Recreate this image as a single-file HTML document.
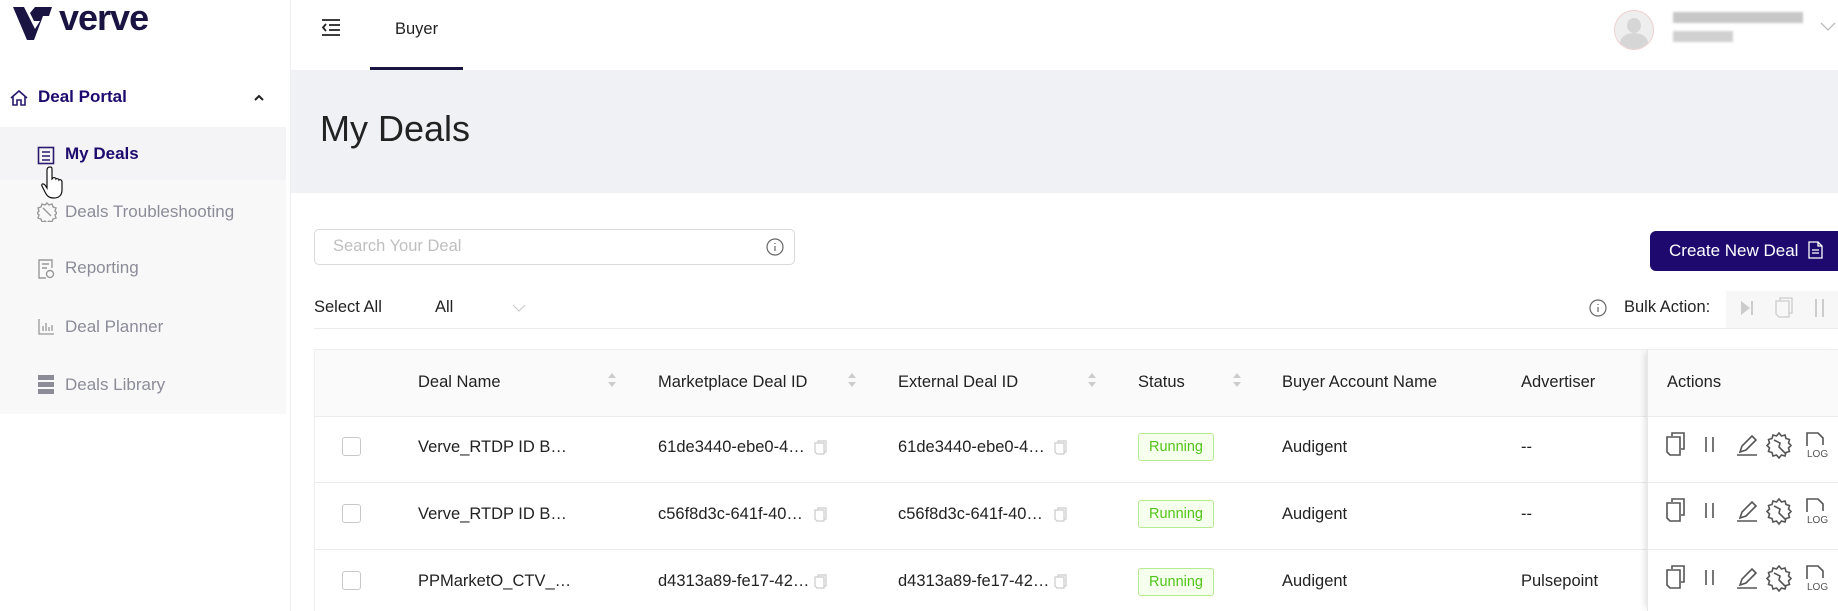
<!DOCTYPE html>
<html><head><meta charset="utf-8"><style>
*{box-sizing:border-box;margin:0;padding:0}
body{width:1838px;height:611px;overflow:hidden;background:#fff;font-family:"Liberation Sans",Arial,sans-serif;color:#222;position:relative}
.a{position:absolute}
.side{left:0;top:0;width:291px;height:611px;border-right:1px solid #eceef2;background:#fff}
.sub{left:0;top:127px;width:286px;height:287px;background:#f8f8f9}
.act{left:0;top:127px;width:286px;height:53px;background:#f4f3f5}
.mi{font-size:17px;color:#8c8c99}
.gray{left:291px;top:70px;width:1547px;height:123px;background:#f0f1f5}
.th{font-size:16.5px;color:#222}
.td{font-size:16.5px;color:#222}
.run{width:76px;height:28px;border:1px solid #b7eb8f;background:#f6ffed;color:#52c41a;font-size:14.5px;border-radius:3px;text-align:center;line-height:26px}
.cb{width:19px;height:19px;border:1px solid #c8c8c8;border-radius:3px;background:#fff}
.hl{height:1px;background:#ececec}
</style></head><body>
<div class="a side"></div>
<!-- logo -->
<svg class="a" style="left:12px;top:4px" width="42" height="38" viewBox="0 0 42 38"><path d="M1 3h11l11 22 5-8h-6l-4-8 5-6h17l-3 9h-6L22 36h-7z" fill="#1a1442"/></svg>
<div class="a" style="left:59px;top:-3px;font-size:36px;font-weight:bold;color:#1a1442;letter-spacing:-1px">verve</div>
<!-- deal portal -->
<svg class="a" style="left:9px;top:88px" width="20" height="20" viewBox="0 0 20 20" fill="none" stroke="#2a1a6e" stroke-width="1.6"><path d="M2 10L10 3l8 7M4 8v9h4v-5h4v5h4V8"/></svg>
<div class="a" style="left:38px;top:87px;font-size:17px;font-weight:bold;color:#1e0a6e">Deal Portal</div>
<svg class="a" style="left:253px;top:93px" width="12" height="9" viewBox="0 0 12 9" fill="none" stroke="#222" stroke-width="2"><path d="M2 7l4-4 4 4"/></svg>
<div class="a sub"></div><div class="a act"></div>
<svg class="a" style="left:37px;top:146px" width="18" height="19" viewBox="0 0 18 19" fill="none" stroke="#2a1a6e" stroke-width="1.6"><rect x="1.5" y="1.5" width="15" height="16"/><path d="M5 6h8M5 10h8M5 14h8"/></svg>
<div class="a" style="left:65px;top:144px;font-size:17px;font-weight:bold;color:#1e0a6e">My Deals</div>
<svg class="a" style="left:40px;top:165px" width="30" height="34" viewBox="0 0 30 34" fill="#fff" stroke="#111" stroke-width="1.2"><path d="M10 2c2 0 2 1 2 3v9l1-1c1-1 3 0 3 1 1-1 3 0 3 1 1-1 3 0 3 2v8c0 5-3 8-8 8s-7-2-9-6l-3-6c-1-2 1-3 3-1l2 3V5c0-2 1-3 3-3z"/></svg>
<svg class="a" style="left:37px;top:202px" width="20" height="20" viewBox="0 0 20 20" fill="none" stroke="#999" stroke-width="1.4"><path d="M10 1l2 2 3-1 1 3 3 1-1 3 2 2-2 2 1 3-3 1-1 3-3-1-2 2-2-2-3 1-1-3-3-1 1-3-2-2 2-2-1-3 3-1 1-3 3 1z"/><path d="M6 6l8 8"/></svg>
<div class="a mi" style="left:65px;top:202px">Deals Troubleshooting</div>
<svg class="a" style="left:38px;top:259px" width="17" height="20" viewBox="0 0 17 20" fill="none" stroke="#999" stroke-width="1.4"><path d="M14 9V1H1v18h7M4 5h7M4 9h5"/><circle cx="12" cy="15" r="3.5"/></svg>
<div class="a mi" style="left:65px;top:258px">Reporting</div>
<svg class="a" style="left:38px;top:318px" width="17" height="17" viewBox="0 0 17 17" fill="none" stroke="#999" stroke-width="1.3"><path d="M1 1v15h15M5 13V8M8 13V5M11 13V9M14 13V7"/></svg>
<div class="a mi" style="left:65px;top:317px">Deal Planner</div>
<svg class="a" style="left:38px;top:375px" width="16" height="19" viewBox="0 0 16 19" fill="#8c8c99"><rect x="0" y="0" width="16" height="5"/><rect x="0" y="7" width="16" height="5"/><rect x="0" y="14" width="16" height="5"/></svg>
<div class="a mi" style="left:65px;top:375px">Deals Library</div>
<!-- header -->
<svg class="a" style="left:321px;top:19px" width="20" height="17" viewBox="0 0 20 17" fill="none" stroke="#222" stroke-width="1.8"><path d="M1 1h18M8 6h11M8 11h11M1 16h18M5 5l-3 3.5 3 3.5"/></svg>
<div class="a" style="left:395px;top:20px;font-size:16.5px;color:#222">Buyer</div>
<div class="a" style="left:370px;top:67px;width:93px;height:3px;background:#1a1442"></div>
<div class="a" style="left:1614px;top:10px;width:40px;height:40px;border-radius:50%;background:#eee;border:1px solid #f0d0d0;overflow:hidden"><div class="a" style="left:12px;top:7px;width:14px;height:15px;border-radius:50%;background:#d6d6d6"></div><div class="a" style="left:5px;top:22px;width:28px;height:20px;border-radius:50% 50% 0 0;background:#d6d6d6"></div></div>
<div class="a" style="left:1673px;top:12px;width:130px;height:11px;background:#c7c7c7;filter:blur(1px)"></div>
<div class="a" style="left:1673px;top:31px;width:60px;height:11px;background:#d0d0d0;filter:blur(1px)"></div>
<svg class="a" style="left:1820px;top:22px" width="16" height="10" viewBox="0 0 16 10" fill="none" stroke="#bbb" stroke-width="1.3"><path d="M1 1l7 7 7-7"/></svg>
<div class="a gray"></div>
<div class="a" style="left:320px;top:108px;font-size:36px;color:#222">My Deals</div>
<!-- search -->
<div class="a" style="left:314px;top:229px;width:481px;height:36px;border:1px solid #d9d9d9;border-radius:5px"></div>
<div class="a" style="left:333px;top:237px;font-size:16.5px;color:#bfbfbf">Search Your Deal</div>
<svg class="a" style="left:766px;top:238px" width="18" height="18" viewBox="0 0 18 18" fill="none" stroke="#666" stroke-width="1.2"><circle cx="9" cy="9" r="8"/><path d="M9 8v5M9 5v1"/></svg>
<div class="a" style="left:1650px;top:231px;width:188px;height:40px;background:#1e0a6e;border-radius:6px 0 0 6px"></div>
<div class="a" style="left:1669px;top:241px;font-size:17px;color:#fff">Create New Deal</div>
<svg class="a" style="left:1808px;top:241px" width="15" height="18" viewBox="0 0 15 18" fill="none" stroke="#fff" stroke-width="1.3"><path d="M1 1h9l4 4v12H1z M10 1v4h4 M4 9h7M4 12h7"/></svg>
<div class="a" style="left:314px;top:298px;font-size:16.5px">Select All</div>
<div class="a" style="left:435px;top:298px;font-size:16.5px">All</div>
<svg class="a" style="left:512px;top:304px" width="14" height="9" viewBox="0 0 14 9" fill="none" stroke="#ccc" stroke-width="1.2"><path d="M1 1l6 6 6-6"/></svg>
<svg class="a" style="left:1589px;top:299px" width="18" height="18" viewBox="0 0 18 18" fill="none" stroke="#666" stroke-width="1.2"><circle cx="9" cy="9" r="8"/><path d="M9 8v5M9 5v1"/></svg>
<div class="a" style="left:1624px;top:298px;font-size:16.5px">Bulk Action:</div>
<div class="a" style="left:1726px;top:291px;width:112px;height:37px;background:#f7f7f7"></div>
<svg class="a" style="left:1740px;top:300px" width="14" height="16" viewBox="0 0 14 16" fill="#ccc"><path d="M1 1l9 7-9 7z"/><rect x="11" y="1" width="2" height="14"/></svg>
<svg class="a" style="left:1775px;top:297px" width="18" height="21" viewBox="0 0 18 21" fill="none" stroke="#ccc" stroke-width="1.3"><path d="M5 4V1h12v15h-3M1 4h13v16H4l-3-3z"/></svg>
<svg class="a" style="left:1815px;top:299px" width="10" height="18" fill="#ccc"><rect x="0" y="0" width="2" height="18"/><rect x="7" y="0" width="2" height="18"/></svg>
<div class="a hl" style="left:314px;top:328px;width:1524px"></div>
<!-- table -->
<div class="a" style="left:314px;top:349px;width:1524px;height:67px;background:#fafafa;border-top:1px solid #eee;border-left:1px solid #eee"></div>
<div class="a" style="left:314px;top:349px;width:1px;height:262px;background:#eee"></div>
<div class="a th" style="left:418px;top:373px">Deal Name</div>
<div class="a th" style="left:658px;top:373px">Marketplace Deal ID</div>
<div class="a th" style="left:898px;top:373px">External Deal ID</div>
<div class="a th" style="left:1138px;top:373px">Status</div>
<div class="a th" style="left:1282px;top:373px">Buyer Account Name</div>
<div class="a th" style="left:1521px;top:373px">Advertiser</div>
<div class="a th" style="left:1667px;top:373px">Actions</div>
<svg class="a" style="left:607px;top:372px" width="10" height="16" fill="#ccc"><path d="M1 6l4-5 4 5zM1 10l4 5 4-5z"/></svg>
<svg class="a" style="left:847px;top:372px" width="10" height="16" fill="#ccc"><path d="M1 6l4-5 4 5zM1 10l4 5 4-5z"/></svg>
<svg class="a" style="left:1087px;top:372px" width="10" height="16" fill="#ccc"><path d="M1 6l4-5 4 5zM1 10l4 5 4-5z"/></svg>
<svg class="a" style="left:1232px;top:372px" width="10" height="16" fill="#ccc"><path d="M1 6l4-5 4 5zM1 10l4 5 4-5z"/></svg>
<div class="a hl" style="left:314px;top:416px;width:1524px"></div>
<div class="a hl" style="left:314px;top:482px;width:1524px"></div>
<div class="a hl" style="left:314px;top:549px;width:1524px"></div>
<div class="a" style="left:1647px;top:349px;width:191px;height:262px;box-shadow:-5px 0 6px -3px rgba(0,0,0,.12);border-left:1px solid #e8e8e8"></div>

<div class="a cb" style="left:342px;top:437px"></div>
<div class="a td" style="left:418px;top:438px">Verve_RTDP ID B…</div>
<div class="a td" style="left:658px;top:438px">61de3440-ebe0-4…</div>
<div class="a td" style="left:898px;top:438px">61de3440-ebe0-4…</div>
<div class="a run" style="left:1138px;top:433px">Running</div>
<div class="a td" style="left:1282px;top:438px">Audigent</div>
<div class="a td" style="left:1521px;top:438px">--</div>

<div class="a cb" style="left:342px;top:504px"></div>
<div class="a td" style="left:418px;top:505px">Verve_RTDP ID B…</div>
<div class="a td" style="left:658px;top:505px">c56f8d3c-641f-40…</div>
<div class="a td" style="left:898px;top:505px">c56f8d3c-641f-40…</div>
<div class="a run" style="left:1138px;top:500px">Running</div>
<div class="a td" style="left:1282px;top:505px">Audigent</div>
<div class="a td" style="left:1521px;top:505px">--</div>

<div class="a cb" style="left:342px;top:571px"></div>
<div class="a td" style="left:418px;top:572px">PPMarketO_CTV_…</div>
<div class="a td" style="left:658px;top:572px">d4313a89-fe17-42…</div>
<div class="a td" style="left:898px;top:572px">d4313a89-fe17-42…</div>
<div class="a run" style="left:1138px;top:568px">Running</div>
<div class="a td" style="left:1282px;top:572px">Audigent</div>
<div class="a td" style="left:1521px;top:572px">Pulsepoint</div>

<svg width="0" height="0" style="position:absolute"><defs>
<g id="cp" fill="none" stroke="#ccc" stroke-width="1.2"><path d="M4 3V1h8v11h-2M1 3h9v11H3l-2-2z"/></g>
<g id="acts" fill="none" stroke="#555" stroke-width="1.6">
<path d="M6 4V1h12v16h-3M1 5h13v18H4l-3-3z"/>
<path d="M40 5v15M47 5v15"/>
<path d="M71 23h20M74 20l2-6 10-10 4 4-10 10z"/>
<path d="M113 1l2.5 3 3.5-1 1 3.5 3.5 1-1 3.5 2.5 2.5-2.5 2.5 1 3.5-3.5 1-1 3.5-3.5-1-2.5 3-2.5-3-3.5 1-1-3.5-3.5-1 1-3.5-2.5-2.5 2.5-2.5-1-3.5 3.5-1 1-3.5 3.5 1z M108 8l6 3-1 4 7 7"/>
<path d="M141 14V1h11l5 5v7"/>
</g></defs></svg>
<svg class="a" style="left:814px;top:440px" width="14" height="16"><use href="#cp"/></svg>
<svg class="a" style="left:1054px;top:440px" width="14" height="16"><use href="#cp"/></svg>
<svg class="a" style="left:814px;top:507px" width="14" height="16"><use href="#cp"/></svg>
<svg class="a" style="left:1054px;top:507px" width="14" height="16"><use href="#cp"/></svg>
<svg class="a" style="left:814px;top:574px" width="14" height="16"><use href="#cp"/></svg>
<svg class="a" style="left:1054px;top:574px" width="14" height="16"><use href="#cp"/></svg>

<svg class="a" style="left:1666px;top:432px" width="162" height="28"><use href="#acts"/><text x="141" y="25" font-size="10" fill="#555" font-family="Liberation Sans">LOG</text></svg>
<svg class="a" style="left:1666px;top:498px" width="162" height="28"><use href="#acts"/><text x="141" y="25" font-size="10" fill="#555" font-family="Liberation Sans">LOG</text></svg>
<svg class="a" style="left:1666px;top:565px" width="162" height="28"><use href="#acts"/><text x="141" y="25" font-size="10" fill="#555" font-family="Liberation Sans">LOG</text></svg>
</body></html>
